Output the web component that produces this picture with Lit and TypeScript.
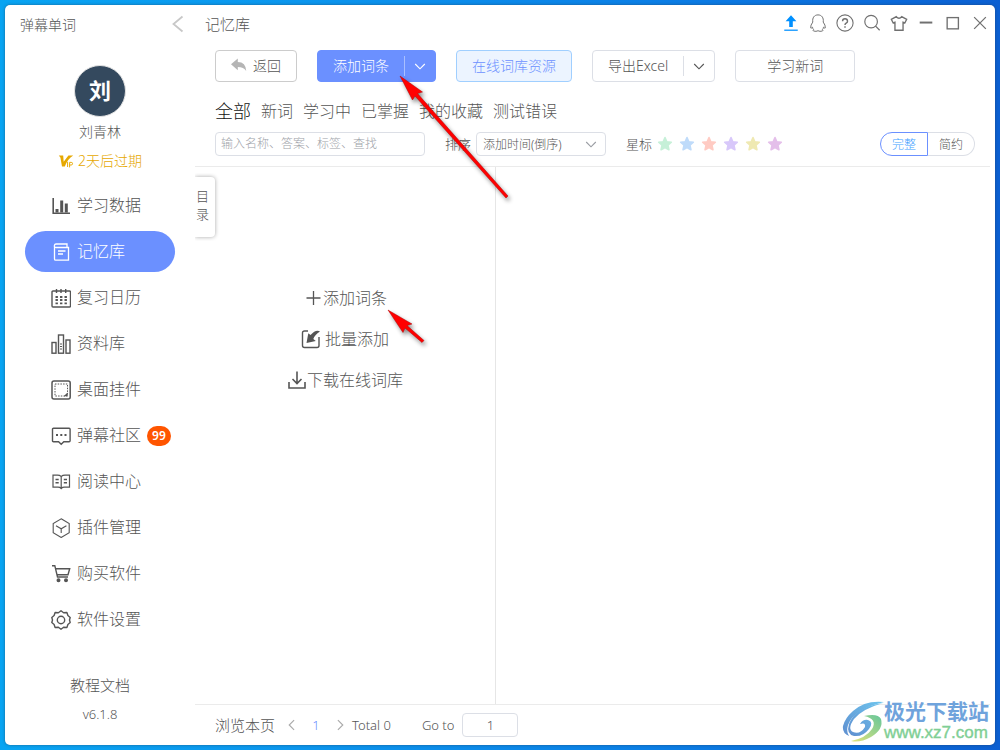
import { LitElement, html, css, svg } from "lit";
import { customElement, property, state } from "lit/decorators.js";
import { classMap } from "lit/directives/class-map.js";

const icons: Record<string, unknown> = {
  chart: svg`<path d="M2.2 2v15.300H19" stroke-width="1.600"/><path d="M6 16.500v-3.500M10.700 16.500V4.500M15.300 16.500V7.500" stroke-width="3"/>`,
  memo: svg`<path d="M3.500 5v12q0 1.200 1.200 1.200h12.800V5.500H5Q3 5.200 3.400 3.500 3.700 2 5 2h11V5" stroke-width="1.300"/><path d="M7 9h7.500M7 12h5" stroke-width="1.300"/>`,
  calendar: svg`<rect x="1" y="3" width="18.500" height="16" rx="1"/><path d="M5.500 1v4M10 1v4M14.700 1v4"/><path d="M4.500 9h2.400M9 9h2.400M13.500 9h2.400M4.500 12h2.400M9 12h2.400M13.500 12h2.400M4.500 15.300h2.400M9 15.300h2.400M13.500 15.300h2.400" stroke-width="1.800"/>`,
  library: svg`<rect x="1" y="8.500" width="4" height="10.700"/><rect x="7.500" y="1" width="5" height="18.200"/><rect x="15" y="6" width="4" height="13.200"/><path d="M9 10h2M9 12.500h2M9 15h2" stroke-width="1"/>`,
  widget: svg`<rect x="1" y="1" width="18.200" height="18" rx="2" stroke-width="1.500"/><rect x="4" y="4" width="12.500" height="12" stroke-width="1" stroke-dasharray="1.500 1.200"/><path d="M16.500 12.500v3.800h-3.800z" fill="currentColor" stroke="none"/>`,
  chat: svg`<path d="M2.500 2.200h15.600q1 0 1 1v11.500q0 1-1 1h-5.300l-2.600 2.500-2.600-2.500H2.500q-1 0-1-1V3.200q0-1 1-1z"/><path d="M5 9h2M9.300 9h2M13.500 9h2" stroke-width="2"/>`,
  book: svg`<path d="M10.200 4.500Q8.700 3.200 6.500 3.200H2v12h5q2 0 3.200 1.300 1.200-1.300 3.200-1.300h5.100v-12H14q-2.300 0-3.800 1.300zM10.200 4.500v12" stroke-width="1.200"/><path d="M4.500 7.500h3.200M4.500 10.800h3.200M12.800 7.500H16M12.800 10.800H16" stroke-width="1.400"/>`,
  cube: svg`<path d="M10.200.8l8 4.800v9.200l-8 4.700-8-4.700V5.600zM5 7.800l5.200 3 5.200-3M10.200 10.800v4.200" stroke-width="1.100"/>`,
  cart: svg`<path d="M1 1.700h2.800L6.500 13H17M4.500 4.700H18.700L17 10.800H6" stroke-width="1.400"/><circle cx="7.500" cy="16.300" r="1.300" fill="currentColor"/><circle cx="15" cy="16.300" r="1.300" fill="currentColor"/>`,
  gear: svg`<path d="M10 .8l2.600 1.900 3.300-.2 1 3 2.300 2-.7 2.500.7 2.500-2.300 2-1 3-3.300-.2L10 19.200l-2.600-1.900-3.300.2-1-3-2.300-2 .7-2.500-.7-2.500 2.300-2 1-3 3.300.2z" stroke-linejoin="round"/><circle cx="10" cy="10" r="3.700"/>`,
  left: svg`<path d="M14.500 2.500L5.500 10l9 7.500" stroke-width="1.800"/>`,
  plus: svg`<path d="M10.500 3v14M3.500 10h14" stroke-width="1.300"/>`,
  batch: svg`<path d="M7 2H3.500q-2 0-2 2v12.500q0 2 2 2H16q2 0 2-2V8"/><path d="M19 2.500q-4-2.500-9.500 3.500L7.300 4.300 5.500 14l9.300-2-2.500-2q2-5 6.700-7.500z" fill="currentColor" stroke="none"/>`,
  download: svg`<path d="M2 12v6h16v-6M10 1.500V13M5.500 9l4.500 4.500L14.500 9" stroke-width="1.600"/>`,
  reply: svg`<path d="M8.500 2v4.300Q18.500 6.500 19 17.500q-3-5-10.500-5v4L0 9z" fill="currentColor" stroke="none"/>`,
  down: svg`<path d="M4 7.500l6 6 6-6"/>`,
  prev: svg`<path d="M13 3l-7 7 7 7" stroke-width="1.600"/>`,
  next: svg`<path d="M7 3l7 7-7 7" stroke-width="1.600"/>`,
  upload: svg`<path d="M10 1.500L4 8h4v6.500h4V8h4z" fill="currentColor" stroke="none"/><path d="M2.500 18h15" stroke-width="1.400"/>`,
  qq: svg`<path d="M4.200 9C3.500 4 6 1 10 1s6.500 3 5.800 8q2.700 3.500 2.300 6.500-1 .5-2-.8-.2 1.700-1.200 2.600 1 1 .1 1.600-3 .9-5-.3-2 1.200-5 .3-.9-.6.1-1.600-1-.9-1.200-2.600-1 1.300-2 .8Q1.500 12.500 4.200 9z" stroke-width="1.100"/>`,
  help: svg`<circle cx="10" cy="10" r="9" stroke-width="1.200"/><path d="M7.300 8q0-2.700 2.700-2.700T12.800 8q0 1.300-1.500 2.200Q10 11 10 12.300M10 13.600v1.600" stroke-width="1.600"/>`,
  search: svg`<circle cx="9" cy="8.500" r="7" stroke-width="1.300"/><path d="M14 13.500l4.500 4.500"/>`,
  shirt: svg`<path d="M7 3L1.500 6l2 4 2-.8V18h9V9.200l2 .8 2-4L13 3q-3 3.500-6 0z" stroke-width="1.500"/>`,
  min: svg`<path d="M3 9.500h14" stroke-width="2.200"/>`,
  max: svg`<rect x="3.500" y="4" width="12.500" height="12.500" stroke-width="1.500"/>`,
  close: svg`<path d="M3.500 3.500l13 13M16.500 3.500l-13 13"/>`,
  star: svg`<path d="M10 2l2.300 5.200 5.600.6-4.200 3.800 1.200 5.600L10 14.400l-4.900 2.800 1.200-5.600-4.200-3.800 5.600-.6z" fill="currentColor" stroke-width="2" stroke-linejoin="round"/>`,
  vip: svg`<path d="M1 3h5.500l.6 8L13 3h6q-7 4-10.500 14H5L3 5.500z" fill="currentColor" stroke="none"/><path d="M12 11v6.500M14.500 18v-6.300h2q1.700 0 1.700 1.600t-1.700 1.700h-2" stroke-width="1.200"/>`,
};

@customElement("ui-icon")
class UiIcon extends LitElement {
  @property() name = "";
  @property({ type: Number }) size = 20;
  static styles = css`
    :host { display: inline-flex; flex: none; }
    .glyph { display: block; fill: none; stroke: currentColor; stroke-width: 1.4; }
  `;
  render() {
    return html`<svg class="glyph" width=${this.size} height=${this.size} viewBox="0 0 20 20" aria-hidden="true">${icons[this.name]}</svg>`;
  }
}

const base = css`
  * { box-sizing: border-box; }
  button, input, select { font: inherit; color: inherit; margin: 0; }
  button { background: none; border: 0; padding: 0; cursor: pointer; display: inline-flex; align-items: center; white-space: nowrap; }
  a { color: inherit; text-decoration: none; }
`;

@customElement("app-sidebar")
class AppSidebar extends LitElement {
  @state() active = 1;
  items: { icon: string; label: string; count?: number }[] = [
    { icon: "chart", label: "学习数据" },
    { icon: "memo", label: "记忆库" },
    { icon: "calendar", label: "复习日历" },
    { icon: "library", label: "资料库" },
    { icon: "widget", label: "桌面挂件" },
    { icon: "chat", label: "弹幕社区", count: 99 },
    { icon: "book", label: "阅读中心" },
    { icon: "cube", label: "插件管理" },
    { icon: "cart", label: "购买软件" },
    { icon: "gear", label: "软件设置" },
  ];
  static styles = [base, css`
    :host { display: flex; flex-direction: column; flex: none; width: 190px; font-size: 14px; }
    .head { display: flex; justify-content: space-between; align-items: center; height: 38px; padding: 0 7px 0 15px; }
    .fold { color: #c8c8c8; }
    .user { display: flex; flex-direction: column; align-items: center; padding-top: 22px; }
    .avatar { width: 52px; height: 52px; border-radius: 50%; border: 1px solid #e2e2e2; background: #34495e; color: #fff; font-size: 22px; font-weight: 700; line-height: 48px; text-align: center; }
    .name { line-height: 20px; margin-top: 5px; }
    .vip { display: flex; align-items: center; gap: 4px; line-height: 20px; margin-top: 9px; color: #e6a800; }
    nav { display: flex; flex-direction: column; gap: 5px; padding: 0 20px; margin-top: 14px; }
    .item { display: flex; align-items: center; gap: 6px; height: 41px; padding-left: 26px; border-radius: 21px; font-size: 16px; white-space: nowrap; }
    .item.on { background: #6b90ff; color: #fff; }
    .label { line-height: 20px; padding-bottom: 2px; }
    .badge { background: #ff5500; color: #fff; font-size: 12px; font-weight: 600; line-height: 20px; padding: 0 5px; border-radius: 10px; }
    .foot { display: flex; flex-direction: column; align-items: center; gap: 9px; margin-top: auto; padding-bottom: 21px; }
    .doc { font-size: 15px; line-height: 20px; }
    .ver { font-size: 13px; line-height: 20px; }
  `];
  render() {
    return html`
      <div class="head"><span>弹幕单词</span><button class="fold" aria-label="收起"><ui-icon name="left"></ui-icon></button></div>
      <div class="user">
        <div class="avatar">刘</div>
        <div class="name">刘青林</div>
        <a class="vip" href="#"><ui-icon name="vip" size="16"></ui-icon>2天后过期</a>
      </div>
      <nav>
        ${this.items.map((it, i) => html`
          <a href="#" class=${classMap({ item: true, on: i === this.active })} @click=${() => (this.active = i)}>
            <ui-icon name=${it.icon}></ui-icon><span class="label">${it.label}</span>
            ${it.count ? html`<span class="badge">${it.count}</span>` : ""}
          </a>`)}
      </nav>
      <div class="foot"><a class="doc" href="#">教程文档</a><span class="ver">v6.1.8</span></div>
    `;
  }
}

@customElement("app-library")
class AppLibrary extends LitElement {
  @state() tab = 0;
  tabs = ["全部", "新词", "学习中", "已掌握", "我的收藏", "测试错误"];
  tools = [
    ["upload", "上传"], ["qq", "联系"], ["help", "帮助"], ["search", "搜索"],
    ["shirt", "皮肤"], ["min", "最小化"], ["max", "最大化"], ["close", "关闭"],
  ];
  static styles = [base, css`
    :host { display: flex; flex-direction: column; flex: 1; min-width: 0; font-size: 14px; }
    .head { display: flex; align-items: center; justify-content: space-between; height: 36px; padding: 0 6px 0 10px; font-size: 15px; }
    .tools { display: flex; gap: 9px; color: #707070; }
    .tools .upload { color: #0090ff; }
    .bar { display: flex; gap: 20px; padding: 9px 20px 0; }
    .btn { height: 32px; border: 1px solid #dcdfe6; border-radius: 4px; justify-content: center; padding-bottom: 2px; }
    .back { width: 82px; gap: 6px; border-color: #ccc; }
    .back ui-icon { color: #b5b5b5; }
    .pair { display: flex; height: 32px; border: 1px solid #dcdfe6; border-radius: 4px; align-items: center; }
    .pair button { justify-content: center; height: 20px; }
    .pair .main { padding: 0 15px 2px; }
    .pair .more { width: 31px; border-left: 1px solid #dcdfe6; }
    .primary { background: #6b90ff; border-color: #6b90ff; color: #fff; }
    .primary .more { border-color: #a9bfff; }
    .online { padding: 0 15px 2px; background: #ecf4ff; border-color: #a0cfff; color: #6b90ff; }
    .study { width: 120px; }
    .tabs { display: flex; align-items: center; gap: 10px; height: 28px; padding: 0 20px; margin-top: 14px; font-size: 16px; }
    .tabs .on { color: #111; font-size: 18px; }
    .filter { display: flex; align-items: center; height: 24px; padding: 0 20px; margin-top: 8px; font-size: 13px; white-space: nowrap; }
    .field { width: 210px; height: 24px; border: 1px solid #dcdfe6; border-radius: 4px; padding: 0 5px 2px; font-size: 12px; background: #fff; outline: 0; }
    .field::placeholder { color: #a0a3a9; opacity: 1; }
    .sort { margin-left: 20px; margin-right: 5px; padding-bottom: 2px; }
    .pick { display: grid; align-items: center; }
    .pick select, .pick ui-icon { grid-area: 1 / 1; }
    .pick select { appearance: none; width: 130px; height: 24px; border: 1px solid #dcdfe6; border-radius: 4px; padding: 0 6px; background: #fff; font-size: 12px; outline: 0; }
    .pick ui-icon { justify-self: end; margin-right: 7px; color: #9a9da3; pointer-events: none; }
    .stars { display: flex; gap: 6px; margin-left: 5px; }
    .mark { margin-left: 20px; padding-bottom: 2px; }
    .s0 { color: #c6f0d8; } .s1 { color: #bfdbfa; } .s2 { color: #ffcbc3; }
    .s3 { color: #d8c8fa; } .s4 { color: #efe9b2; } .s5 { color: #e4bfea; }
    .seg { display: flex; margin-left: auto; font-size: 12px; }
    .seg label { display: flex; align-items: center; justify-content: center; width: 48px; height: 24px; border: 1px solid #dcdfe6; cursor: pointer; }
    .seg label:first-child { border-radius: 12px 0 0 12px; }
    .seg label:last-child { border-radius: 0 12px 12px 0; border-left: 0; width: 47px; }
    .seg label:has(:checked) { border-color: #6b90ff; color: #409eff; }
    .seg input { appearance: none; width: 0; height: 0; }
    .body { display: flex; flex: 1; margin-top: 10px; margin-right: 5px; border-top: 1px solid #ebebeb; border-bottom: 1px solid #ebebeb; position: relative; }
    .list { width: 301px; border-right: 1px solid #e6e6e6; padding-top: 119px; display: flex; flex-direction: column; align-items: center; gap: 17px; font-size: 16px; }
    .list button { line-height: 24px; }
    .list .gap { gap: 4px; }
    .toc { position: absolute; left: 0; top: 10px; width: 20px; height: 60px; background: #fff; border-radius: 0 4px 4px 0; box-shadow: 0 0 4px rgba(0, 0, 0, .35); clip-path: inset(-4px -6px -4px 0); font-size: 13px; line-height: 18px; white-space: normal; padding: 0 6px 4px 1px; }
    .foot { display: flex; align-items: center; height: 40px; padding: 0 20px; font-size: 13px; white-space: nowrap; }
    .this { font-size: 15px; margin-right: 10px; padding-bottom: 2px; }
    .foot .page { width: 34px; justify-content: center; color: #6b90ff; }
    .nav { color: #aaa; }
    .total { margin-left: 5px; margin-right: 31px; }
    .foot input { width: 56px; height: 24px; margin-left: 8px; border: 1px solid #dcdfe6; border-radius: 4px; text-align: center; outline: 0; background: #fff; }
  `];
  render() {
    return html`
      <div class="head">
        <span>记忆库</span>
        <div class="tools">${this.tools.map(([n, l]) => html`<button class=${n} aria-label=${l}><ui-icon name=${n} size="18"></ui-icon></button>`)}</div>
      </div>
      <div class="bar">
        <button class="btn back"><ui-icon name="reply" size="16"></ui-icon>返回</button>
        <div class="pair primary"><button class="main">添加词条</button><button class="more" aria-label="更多添加方式"><ui-icon name="down" size="16"></ui-icon></button></div>
        <button class="btn online">在线词库资源</button>
        <div class="pair"><button class="main">导出Excel</button><button class="more" aria-label="更多导出方式"><ui-icon name="down" size="16"></ui-icon></button></div>
        <button class="btn study">学习新词</button>
      </div>
      <div class="tabs">${this.tabs.map((t, i) => html`<button class=${classMap({ on: i === this.tab })} @click=${() => (this.tab = i)}>${t}</button>`)}</div>
      <div class="filter">
        <input class="field" aria-label="查找" placeholder="输入名称、答案、标签、查找">
        <label class="sort" for="sort">排序</label>
        <div class="pick"><select id="sort"><option>添加时间(倒序)</option></select><ui-icon name="down" size="16"></ui-icon></div>
        <span class="mark">星标</span>
        <div class="stars">${[0, 1, 2, 3, 4, 5].map((i) => html`<button class="s${i}" aria-label="星标 ${i + 1}"><ui-icon name="star" size="16"></ui-icon></button>`)}</div>
        <div class="seg"><label><input type="radio" name="view" checked>完整</label><label><input type="radio" name="view">简约</label></div>
      </div>
      <div class="body">
        <div class="list">
          <button><ui-icon name="plus"></ui-icon>添加词条</button>
          <button class="gap"><ui-icon name="batch"></ui-icon>批量添加</button>
          <button><ui-icon name="download"></ui-icon>下载在线词库</button>
        </div>
        <button class="toc">目录</button>
      </div>
      <div class="foot">
        <span class="this">浏览本页</span>
        <button class="nav" aria-label="上一页"><ui-icon name="prev" size="14"></ui-icon></button>
        <button class="page">1</button>
        <button class="nav" aria-label="下一页"><ui-icon name="next" size="14"></ui-icon></button>
        <span class="total">Total 0</span>
        <label for="go">Go to</label><input id="go" value="1">
      </div>
    `;
  }
}

@customElement("app-root")
class AppRoot extends LitElement {
  static styles = css`
    :host { display: block; position: relative; height: 100vh; box-sizing: border-box; padding: 5px; overflow: hidden;
      background: linear-gradient(90deg, #08a4f2 0%, #0b96ee 30%, #0b7fe6 65%, #0b5fd2 100%);
      font-family: "Noto Sans", "Noto Sans CJK SC", sans-serif; font-weight: 300; color: #555; }
    .window { display: flex; height: 100%; background: #fff; border-radius: 5px; box-shadow: 0 0 3px rgba(40, 60, 80, .6); }
    .arrows { position: absolute; left: 0; top: 0; pointer-events: none; filter: drop-shadow(2px 3px 2px rgba(0, 0, 0, .45)); }
    .brand { position: absolute; right: 11px; bottom: 7px; display: flex; align-items: center; pointer-events: none; }
    .words { display: flex; flex-direction: column; }
    .cn { font-size: 21px; font-weight: 700; line-height: 23px; color: #6fa3dc; }
    .url { font-family: "Liberation Sans", sans-serif; font-size: 17px; line-height: 20px; color: #7fcf95; -webkit-text-stroke: 0.4px #7fcf95; }
  `;
  render() {
    return html`
      <div class="window"><app-sidebar></app-sidebar><app-library></app-library></div>
      <svg class="arrows" width="530" height="360" viewBox="0 0 530 360" aria-hidden="true">
        <g fill="#ff0000" stroke="#b00000" stroke-width=".5">
          <path d="M400 76l22.500 16-5 1.500 90.500 102.500-2 2L415 96l-2.500 4z"/>
          <path d="M388 310l24 14-5 1.500 17 15-2 2L405 328l-2 4.500z"/>
        </g>
      </svg>
      <div class="brand" aria-hidden="true">
        <svg width="42" height="42" viewBox="0 0 42 42">
          <defs>
            <linearGradient id="b" x1="0" y1="1" x2="1" y2="0"><stop offset="0" stop-color="#5f8fd0"/><stop offset="1" stop-color="#6ec5ee"/></linearGradient>
            <linearGradient id="g" x1="0" y1="1" x2="1" y2="0"><stop offset="0" stop-color="#e4e37a"/><stop offset="1" stop-color="#65c69b"/></linearGradient>
          </defs>
          <path d="M42 1Q23-1 11 10 3 17 1 25 0 32 7 35 4 31 6 24 12 8 42 1z" fill="url(#b)"/>
          <path d="M41 2Q20 8 12 18 5 28 11 31q7 3 12-5 1-5-5-3 3-5 8-4 6 2 1 9-6 8-15 7-8-2-5-12Q13 6 41 2z" fill="url(#b)"/>
          <path d="M22 15q14-3 17 3 3 10-10 18-11 6-20 4 15-3 21-12 6-10-8-13z" fill="url(#g)"/>
        </svg>
        <div class="words"><span class="cn">极光下载站</span><span class="url">www.xz7.com</span></div>
      </div>
    `;
  }
}
